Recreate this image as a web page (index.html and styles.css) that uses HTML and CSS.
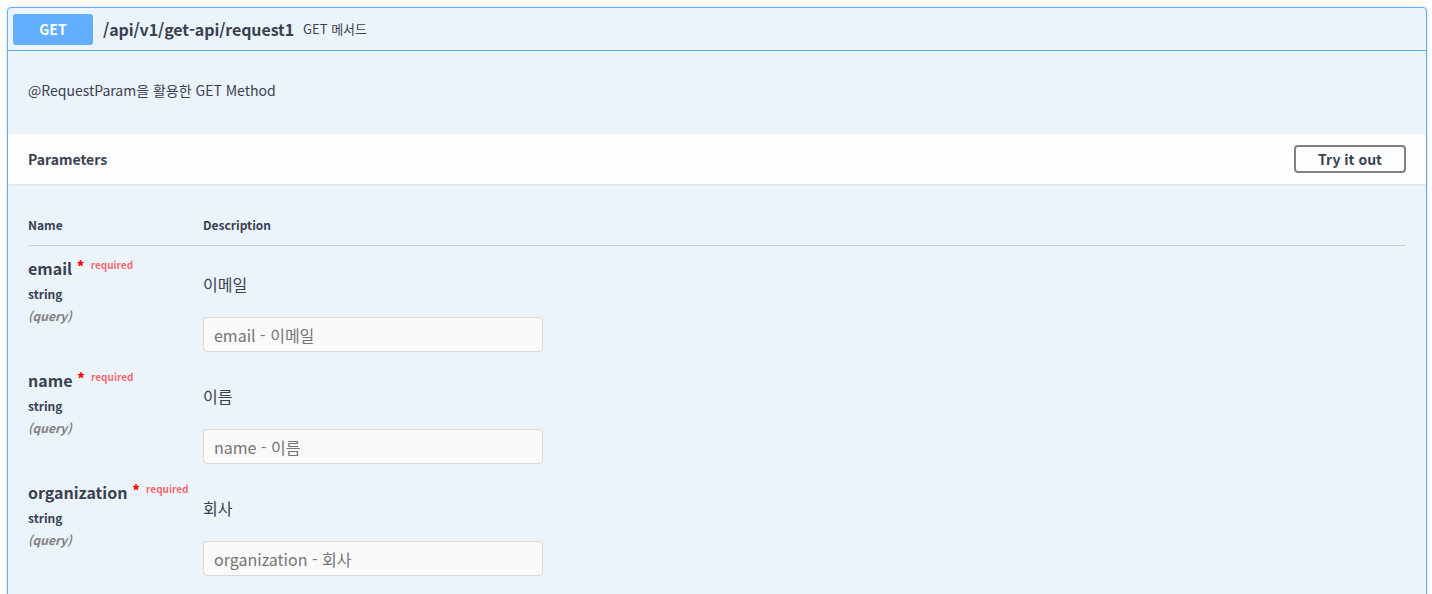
FILE: index.html
```html
<!DOCTYPE html>
<html lang="ko">
<head>
<meta charset="utf-8">
<title>Swagger</title>
<link rel="stylesheet" href="styles.css">
</head>
<body>
<div class="page">
  <div class="opblock">
    <div class="summary">
      <span class="method">GET</span>
      <span class="path">/api/v1/get-api/request1</span>
      <span class="summary-desc">GET 메서드</span>
    </div>
    <div class="description">
      <p>@RequestParam을 활용한 GET Method</p>
    </div>
    <div class="section-header">
      <h4>Parameters</h4>
      <button class="try-btn">Try it out</button>
    </div>
    <div class="table-container">
      <div class="thead">
        <div class="col-name">Name</div>
        <div class="col-desc">Description</div>
      </div>
      <div class="param">
        <div class="col-name">
          <div class="pname">email<span class="star">&nbsp;*</span><span class="req">required</span></div>
          <div class="ptype">string</div>
          <div class="pin">(query)</div>
        </div>
        <div class="col-desc">
          <p class="pdesc">이메일</p>
          <input class="pinput" type="text" placeholder="email - 이메일">
        </div>
      </div>
      <div class="param">
        <div class="col-name">
          <div class="pname">name<span class="star">&nbsp;*</span><span class="req">required</span></div>
          <div class="ptype">string</div>
          <div class="pin">(query)</div>
        </div>
        <div class="col-desc">
          <p class="pdesc">이름</p>
          <input class="pinput" type="text" placeholder="name - 이름">
        </div>
      </div>
      <div class="param">
        <div class="col-name">
          <div class="pname">organization<span class="star">&nbsp;*</span><span class="req">required</span></div>
          <div class="ptype">string</div>
          <div class="pin">(query)</div>
        </div>
        <div class="col-desc">
          <p class="pdesc">회사</p>
          <input class="pinput" type="text" placeholder="organization - 회사">
        </div>
      </div>
    </div>
  </div>
</div>
</body>
</html>
```
FILE: styles.css
```css
* { box-sizing: border-box; }
html, body {
  margin: 0;
  padding: 0;
  background: #fff;
  overflow: hidden;
}
body {
  font-family: "Noto Sans CJK KR", "Noto Sans", sans-serif;
  color: #3b4151;
}
.page {
  padding: 7px 5px 0 7px;
}
.opblock {
  border: 1px solid #61affe;
  border-radius: 4px;
  background: #ebf3fb;
  box-shadow: 0 0 3px rgba(0,0,0,.19);
  height: 620px;
}
.summary {
  display: flex;
  align-items: center;
  padding: 5px;
  height: 43px;
  border-bottom: 1px solid #61affe;
}
.method {
  min-width: 80px;
  height: 31px;
  line-height: 31px;
  text-align: center;
  background: #61affe;
  color: #fff;
  font-weight: 700;
  font-size: 14px;
  border-radius: 3px;
}
.path {
  padding: 0 9px 0 10px;
  font-size: 16px;
  font-weight: 700;
  line-height: 20px;
  letter-spacing: -0.1px;
}
.summary-desc {
  font-size: 13px;
  line-height: 20px;
}
.description {
  padding: 29px 20px 34px;
}
.description p {
  margin: 0;
  font-size: 14px;
  line-height: 20px;
}
.section-header {
  display: flex;
  align-items: center;
  justify-content: space-between;
  height: 50px;
  padding: 0 20px;
  background: rgba(255,255,255,.8);
  box-shadow: 0 1px 2px rgba(0,0,0,.1);
}
.section-header h4 {
  margin: 0;
  font-size: 14px;
  font-weight: 700;
  line-height: 20px;
}
.try-btn {
  width: 112px;
  height: 28px;
  border: 2px solid #808080;
  border-radius: 4px;
  background: transparent;
  font-family: inherit;
  font-size: 14px;
  font-weight: 700;
  color: #3b4151;
  padding: 0;
  line-height: 22px;
}
.table-container {
  padding: 20px 20px 0;
}
.thead {
  display: flex;
  padding: 13px 0 12px;
  border-bottom: 1px solid rgba(59,65,81,.2);
  font-size: 12px;
  font-weight: 700;
  line-height: 16px;
}
.col-name {
  width: 175px;
  flex: none;
}
.col-desc {
  flex: 1;
}
.param {
  display: flex;
  height: 112px;
}
.param .col-name {
  padding-top: 12px;
}
.pname {
  font-size: 16px;
  font-weight: 700;
  line-height: 20px;
  white-space: nowrap;
}
.star {
  color: red;
  font-size: 16px;
  position: relative;
  top: -2px;
}
.req {
  color: rgba(255,0,0,.6);
  font-size: 10px;
  padding: 5px 5px 5px 6px;
  position: relative;
  top: -6px;
}
.ptype {
  margin-top: 5px;
  font-size: 12px;
  font-weight: 700;
  line-height: 16px;
}
.pin {
  margin-top: 6px;
  font-size: 12px;
  font-weight: 700;
  font-style: italic;
  line-height: 16px;
  color: #808080;
}
.param .col-desc {
  padding-top: 28px;
}
.pdesc {
  margin: 0;
  font-size: 16px;
  line-height: 20px;
}
.pinput {
  display: block;
  margin-top: 23px;
  width: 340px;
  height: 35px;
  padding: 0 10px;
  border: 1px solid #d9d9d9;
  border-radius: 4px;
  background: #fafafa;
  font-family: inherit;
  font-size: 16px;
  color: #3b4151;
}
.pinput::placeholder {
  color: #757575;
}
```
